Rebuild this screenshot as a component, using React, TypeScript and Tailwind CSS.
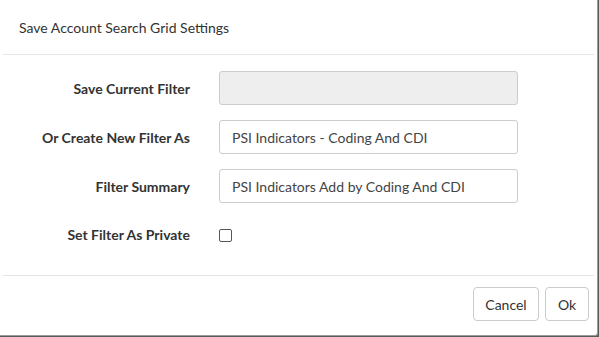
import React, { useState } from "react";

const labelCls = "text-right text-[14px] font-bold text-[#333]";
const inputCls =
  "h-[34px] w-[299px] rounded-[3px] border border-[#ccc] px-[12px] text-[14px] text-[#444] outline-none";

export default function App() {
  const [values, setValues] = useState({
    current: "",
    name: "PSI Indicators - Coding And CDI",
    summary: "PSI Indicators Add by Coding And CDI",
    isPrivate: false,
  });

  const handleChange = (e: any) => {
    const { name, type, checked, value } = e.target;
    setValues({ ...values, [name]: type === "checkbox" ? checked : value });
  };

  return (
    <div
      className="h-[337px] w-[599px] bg-[#5a5a5a]"
      style={{ fontFamily: "Lato, 'Open Sans', sans-serif" }}
    >
      <div className="flex h-[336px] w-[598px] flex-col rounded-br-[3px] border-r border-b border-[#9a9a9a] bg-white text-[#333]">
        <div className="flex h-[54px] items-center px-[19px] text-[14px]">
          Save Account Search Grid Settings
        </div>
        <div className="mx-[3px] border-t border-[#e5e5e5]" />

        <div className="flex-1 pt-[16px]">
          <div className="grid grid-cols-[190px_299px] gap-x-[29px] gap-y-[15px] items-center">
            <div className={labelCls}>Save Current Filter</div>
            <input
              name="current"
              disabled
              value={values.current}
              onChange={handleChange}
              className={inputCls + " bg-[#eeeeee]"}
            />

            <div className={labelCls}>Or Create New Filter As</div>
            <input
              name="name"
              value={values.name}
              onChange={handleChange}
              className={inputCls + " bg-white"}
            />

            <div className={labelCls}>Filter Summary</div>
            <input
              name="summary"
              value={values.summary}
              onChange={handleChange}
              className={inputCls + " bg-white"}
            />

            <div className={labelCls + " leading-[34px]"}>Set Filter As Private</div>
            <div className="flex h-[34px] items-center">
              <input
                type="checkbox"
                name="isPrivate"
                checked={values.isPrivate}
                onChange={handleChange}
                className="h-[13px] w-[13px] appearance-none rounded-[2px] border border-[#555] bg-white"
              />
            </div>
          </div>
        </div>

        <div className="mx-[3px] border-t border-[#e5e5e5]" />
        <div className="flex h-[59px] items-start justify-end gap-[6px] pt-[11px] pr-[8px]">
          <button className="h-[34px] w-[66px] rounded-[4px] border border-[#ccc] bg-white text-[14px] text-[#333]">
            Cancel
          </button>
          <button className="h-[34px] w-[44px] rounded-[4px] border border-[#ccc] bg-white text-[14px] text-[#333]">
            Ok
          </button>
        </div>
      </div>
    </div>
  );
}
